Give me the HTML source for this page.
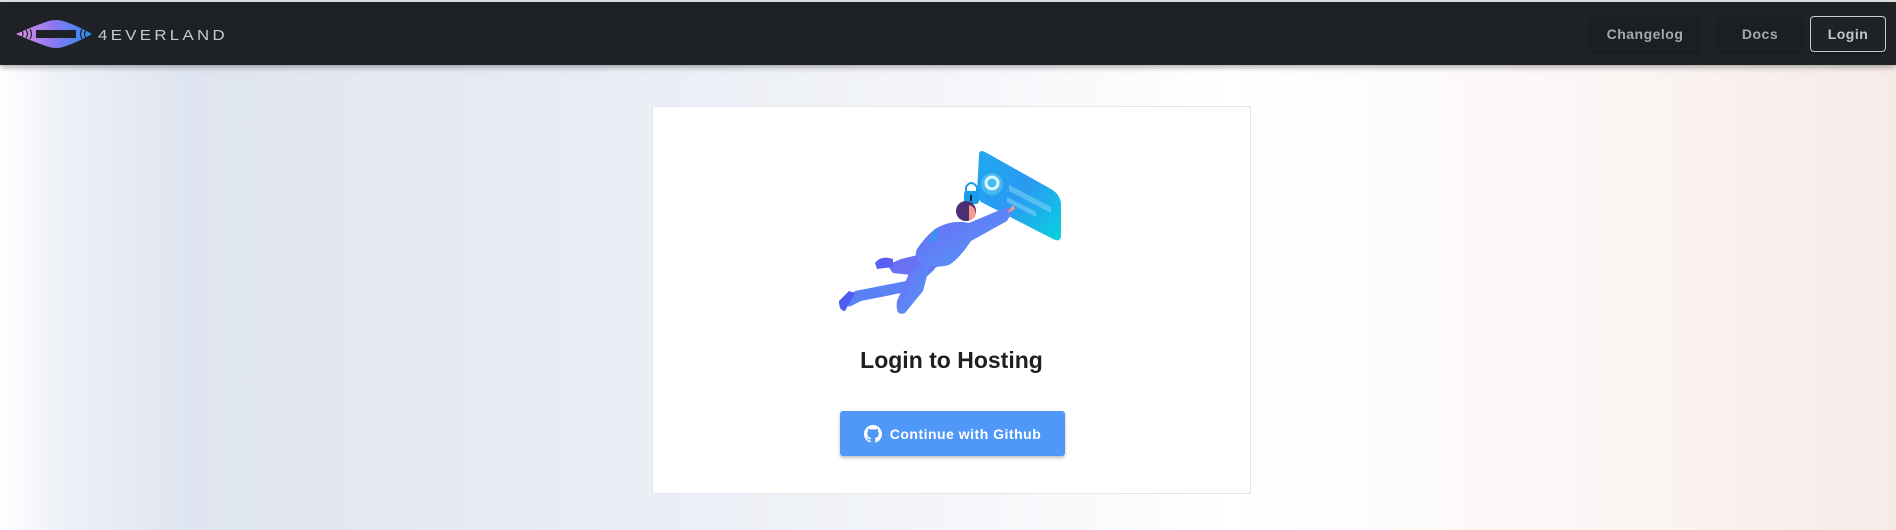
<!DOCTYPE html>
<html><head><meta charset="utf-8"><style>
*{margin:0;padding:0;box-sizing:border-box}
html,body{width:1896px;height:530px;overflow:hidden}
body{font-family:"Liberation Sans",sans-serif;position:relative;
background:linear-gradient(90deg,#ffffff 0px,#eef1f7 60px,#dfe5f0 185px,#e6eaf3 500px,#f2f4f8 900px,#ffffff 1230px,#fbf6f5 1600px,#f6ebe8 1896px);}
.top{position:absolute;left:0;top:0;width:1896px;height:2px;background:#e8e8e8}
.nav{position:absolute;left:0;top:2px;width:1896px;height:63px;background:#1e2126;box-shadow:0 2px 6px rgba(0,0,0,.35)}
.btn{position:absolute;top:14px;height:36px;border-radius:4px;color:#a6a8ab;font-weight:bold;font-size:14px;letter-spacing:.5px;display:flex;align-items:center;justify-content:center;background:#1b1e22;box-shadow:0 1px 2px rgba(0,0,0,.3)}
.card{position:absolute;left:652px;top:106px;width:599px;height:388px;background:#fff;border:1px solid #e3e6ec}
h1{position:absolute;left:0;width:100%;top:240px;text-align:center;font-size:23px;font-weight:bold;color:#1f1f1f}
.gh{position:absolute;left:187px;top:304px;width:225px;height:45px;background:#4f98f8;border-radius:3px;box-shadow:0 2px 3px rgba(0,0,0,.25);color:#fff;font-weight:bold;font-size:14px;letter-spacing:.5px;display:flex;align-items:center;justify-content:center;gap:8px}
</style></head><body>
<div class="top"></div>
<div class="nav">
<svg style="position:absolute;left:14px;top:12px" width="215" height="40" viewBox="0 0 215 40">
<defs><linearGradient id="lg" x1="0" x2="1"><stop offset="0" stop-color="#e08ee8"/><stop offset=".5" stop-color="#8a78f0"/><stop offset="1" stop-color="#2b8cf5"/></linearGradient></defs>
<path d="M2 20 Q20 12 32 8 Q42 4 52 8 Q64 12 78 20 Q64 28 52 32 Q42 36 32 32 Q20 28 2 20 Z" fill="url(#lg)"/>
<rect x="22" y="16" width="40" height="8" fill="#1e2126"/>
<path d="M8 17 q2 3 0 6 M12 16 q3 4 0 8 M16 15 q3 5 0 10 M68 15 q-3 5 0 10 M72 16 q-3 4 0 8" stroke="#1e2126" stroke-width="1.2" fill="none"/>
<text x="84" y="26" font-family="Liberation Sans,sans-serif" font-size="15" fill="#c8cacd" letter-spacing="3" textLength="130" lengthAdjust="spacingAndGlyphs">4EVERLAND</text>
</svg>
<div class="btn" style="left:1591px;width:108px">Changelog</div>
<div class="btn" style="left:1719px;width:82px">Docs</div>
<div class="btn" style="left:1810px;width:76px;border:1px solid #c8cacd;background:transparent;color:#c4c6c9">Login</div>
</div>
<div class="card">
<svg style="position:absolute;left:178px;top:34px" width="240" height="180" viewBox="0 0 240 180">
<defs>
<linearGradient id="pn" x1="0" y1="0" x2="1" y2="1"><stop offset="0" stop-color="#1fa8ee"/><stop offset=".5" stop-color="#2a9af2"/><stop offset="1" stop-color="#07d3df"/></linearGradient>
<linearGradient id="bd" x1="0" y1="0" x2="1" y2="1"><stop offset="0" stop-color="#7366f5"/><stop offset="1" stop-color="#4aa0f7"/></linearGradient>
</defs>
<path d="M148 14 Q148 8 154 11 L220 48 Q230 54 230 64 L230 94 Q230 102 222 98 L152 62 Q146 59 146 52 Z" fill="url(#pn)"/>
<circle cx="161" cy="43" r="11" fill="#63c7f0" opacity=".6"/>
<circle cx="161" cy="42" r="6" fill="none" stroke="#d6f7fb" stroke-width="3"/>
<path d="M178 44 L220 66 L220 72 L178 50Z" fill="#7ad0f6" opacity=".6"/>
<path d="M176 56 L205 71 L205 76 L176 61Z" fill="#7ad0f6" opacity=".6"/>
<path d="M135 46 q5 -8 11 0 v5 h-11z" fill="none" stroke="#1a9de8" stroke-width="2"/>
<rect x="133" y="50" width="15" height="13" rx="3" fill="#1a9de8"/>
<rect x="139" y="54" width="2" height="6" fill="#123"/>
<!-- back leg -->
<path d="M92 124 L75 140 L24 150 L14 158 L18 166 L30 160 L80 150 L104 128Z" fill="#5a82f5"/>
<path d="M8 160 L18 150 L24 152 L14 170 Q8 170 8 160Z" fill="#4f5cf0"/>
<!-- front leg -->
<path d="M70 118 L56 124 L62 132 L90 135 L106 126 L120 118 L112 108Z" fill="#6a70f2"/>
<path d="M44 122 Q50 114 62 118 L62 126 L46 128Z" fill="#5b5ef3"/>
<path d="M100 120 L92 150 L74 172 Q64 176 66 160 L80 128Z" fill="url(#bd)"/>
<!-- torso -->
<path d="M104 88 Q120 78 138 82 L176 66 L182 70 L176 80 L140 100 Q128 118 118 124 Q102 128 90 122 Q82 116 86 108 Q94 96 104 88Z" fill="url(#bd)"/>
<path d="M100 92 L108 86 L106 100 L98 102Z" fill="#3f8ff0"/>
<circle cx="135" cy="70" r="10" fill="#4b2e73"/>
<path d="M138 64 q8 2 6 12 l-6 4z" fill="#f59b8a"/>
<path d="M176 72 l6 -8 2 4z" fill="#f59b8a"/>
</svg>
<h1>Login to Hosting</h1>
<div class="gh"><svg width="18" height="18" viewBox="0 0 16 16"><path fill="#fff" d="M8 0C3.58 0 0 3.58 0 8c0 3.54 2.29 6.53 5.47 7.59.4.07.55-.17.55-.38 0-.19-.01-.82-.01-1.49-2.01.37-2.530-.49-2.69-.94-.09-.23-.48-.94-.82-1.13-.28-.15-.68-.52-.01-.53.63-.01 1.08.58 1.23.82.72 1.21 1.870.87 2.330.66.07-.52.28-.87.51-1.070-1.78-.2-3.64-.89-3.64-3.95 0-.87.31-1.590.82-2.15-.08-.2-.36-1.020.08-2.12 0 0 .67-.21 2.2.82.64-.18 1.32-.27 2-.27.68 0 1.36.09 2 .27 1.53-1.04 2.2-.82 2.2-.82.44 1.1.16 1.920.08 2.120.51.56.82 1.27.82 2.15 0 3.07-1.870 3.75-3.65 3.95.29.25.54.73.54 1.48 0 1.07-.01 1.93-.01 2.2 0 .21.15.46.55.38A8.013 8.013 0 0016 8c0-4.42-3.58-8-8-8z"/></svg>Continue with Github</div>
</div>
</body></html>
